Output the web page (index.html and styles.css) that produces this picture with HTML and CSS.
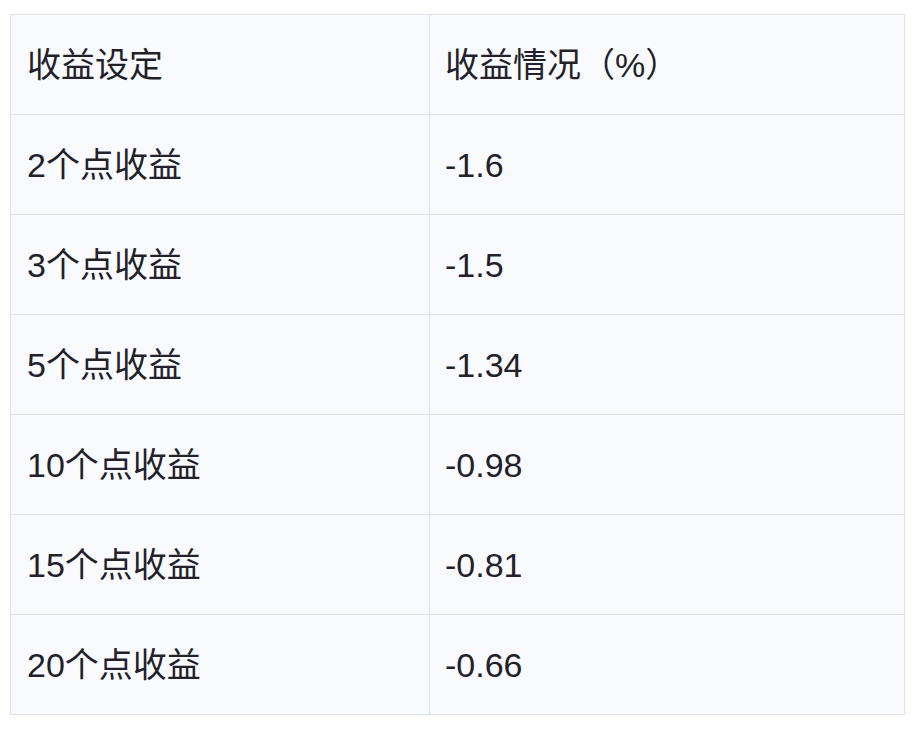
FILE: index.html
```html
<!DOCTYPE html>
<html lang="zh">
<head>
<meta charset="utf-8">
<link rel="stylesheet" href="styles.css">
</head>
<body>
<div class="wrap">
<table class="grid">
  <colgroup><col class="c1"><col class="c2"></colgroup>
  <tr><td>收益设定</td><td>收益情况（%）</td></tr>
  <tr><td>2个点收益</td><td>-1.6</td></tr>
  <tr><td>3个点收益</td><td>-1.5</td></tr>
  <tr><td>5个点收益</td><td>-1.34</td></tr>
  <tr><td>10个点收益</td><td>-0.98</td></tr>
  <tr><td>15个点收益</td><td>-0.81</td></tr>
  <tr><td>20个点收益</td><td>-0.66</td></tr>
</table>
</div>
</body>
</html>
```
FILE: styles.css
```css
html, body { margin: 0; padding: 0; background: #ffffff; }
.wrap { padding: 14px 0 0 10px; }
.grid {
  border-collapse: collapse;
  width: 895px;
  background: #f9fafd;
  font-family: "Liberation Sans", "Noto Sans CJK SC", sans-serif;
  font-size: 34px;
  color: #231f2b;
  table-layout: fixed;
}
.c1 { width: 419px; }
.grid td {
  border: 1px solid #dfe1e9;
  height: 99px;
  padding: 0 0 0 16px;
  vertical-align: middle;
  line-height: 1;
}
.grid tr td:nth-child(2) { padding-left: 15px; }
```
